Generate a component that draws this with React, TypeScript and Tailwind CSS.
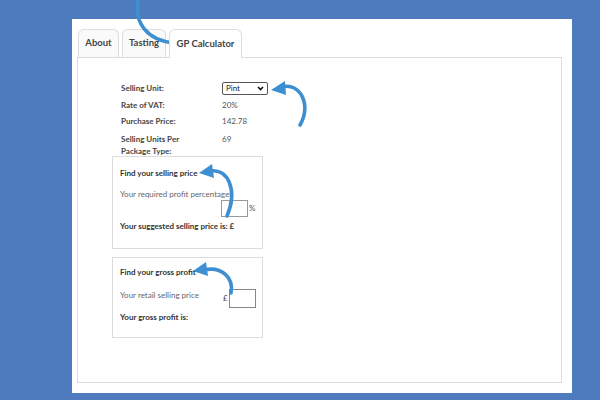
import React from "react";

export default function App() {
  return (
    <div className="relative w-[600px] h-[400px] bg-[#4e7bbd] pt-[19px] pl-[72px] overflow-hidden" style={{ fontFamily: "Lato, 'Open Sans', sans-serif" }}>
      <div className="w-[500px] h-[374px] bg-white pt-[10px] pl-[5px] pr-[10px]">
        {/* Tabs */}
        <div className="flex items-end gap-[3px] pl-[1px] h-[28px]">
          <div className="w-[41px] h-[28px] border border-b-0 border-[#dcdcdc] rounded-t-[6px] bg-[#fafafa] flex items-center justify-center text-[9.5px] font-bold text-[#444]">About</div>
          <div className="w-[44px] h-[28px] border border-b-0 border-[#dcdcdc] rounded-t-[6px] bg-[#fafafa] flex items-center justify-center text-[9.5px] font-bold text-[#444]">Tasting</div>
          <div className="relative z-10 w-[73px] h-[29px] -mb-px border border-b-0 border-[#dcdcdc] rounded-t-[6px] bg-white flex items-center justify-center text-[9.5px] font-bold text-[#444]">GP Calculator</div>
        </div>
        {/* Panel */}
        <div className="h-[326px] border border-[#dcdcdc] pl-[34px] pt-[22px]">
          <div className="pl-[9px] text-[8px] font-bold text-[#444] leading-[10px]">
            <div className="flex items-center h-[16.5px]">
              <div className="w-[101px]">Selling Unit:</div>
              <div className="w-[46px] h-[13px] border border-[#555] rounded-[2px] flex items-center justify-between px-[3px] font-normal text-[#222]">
                <span>Pint</span>
                <svg width="7" height="5" viewBox="0 0 7 5"><path d="M1 1 L3.5 3.6 L6 1" stroke="#111" strokeWidth="1.6" fill="none" /></svg>
              </div>
            </div>
            <div className="flex items-center h-[16.5px]">
              <div className="w-[101px]">Rate of VAT:</div>
              <div className="font-normal text-[#555]">20%</div>
            </div>
            <div className="flex items-center h-[16.5px]">
              <div className="w-[101px]">Purchase Price:</div>
              <div className="font-normal text-[#555]">142.78</div>
            </div>
            <div className="flex pt-[3px] h-[26px]">
              <div className="w-[101px] leading-[12px]">Selling Units Per<br />Package Type:</div>
              <div className="font-normal text-[#555] leading-[12px]">69</div>
            </div>
          </div>
          {/* Box 1 */}
          <div className="w-[151px] h-[93px] border border-[#dcdcdc] pl-[7px] pt-[11px] text-[8px] leading-[10px] text-[#333]">
            <div className="font-bold">Find your selling price</div>
            <div className="mt-[11px] text-[#666]">Your required profit percentage</div>
            <div className="flex items-center ml-[101px] mt-[1px]">
              <div className="w-[27px] h-[17px] border border-[#999]" />
              <span className="ml-[1px] text-[#555]">%</span>
            </div>
            <div className="mt-[4px] font-bold">Your suggested selling price is: £</div>
          </div>
          {/* Box 2 */}
          <div className="mt-[8px] w-[151px] h-[81px] border border-[#dcdcdc] pl-[7px] pt-[9px] text-[8px] leading-[10px] text-[#333]">
            <div className="font-bold">Find your gross profit</div>
            <div className="flex mt-[12px] h-[19px]">
              <div className="w-[103px] text-[#666] pt-[1px]">Your retail selling price</div>
              <div className="pt-[4px] text-[#444]">£</div>
              <div className="ml-[1px] w-[27px] h-[19px] border border-[#888]" />
            </div>
            <div className="mt-[4px] font-bold">Your gross profit is:</div>
          </div>
        </div>
      </div>

      {/* Arrows overlay */}
      <svg className="absolute left-0 top-0 pointer-events-none" width="600" height="400" viewBox="0 0 600 400">
        <g stroke="#3d8fd1" strokeWidth="3.6" fill="none" strokeLinecap="round">
          <path d="M138 0 C 134 22, 146 40, 174 43" />
          <path d="M282 87 C 300 82, 312 105, 300 125" />
          <path d="M210 171 C 228 168, 238 190, 227 216" />
          <path d="M204 270 C 222 266, 234 278, 231 293" />
        </g>
        <g fill="#3d8fd1">
          <polygon points="187,43 172,36 172,50" />
          <polygon points="271,90 285,81 286,95" />
          <polygon points="199,173 212,164 214,178" />
          <polygon points="193,271 206,262 208,276" />
        </g>
      </svg>
    </div>
  );
}
